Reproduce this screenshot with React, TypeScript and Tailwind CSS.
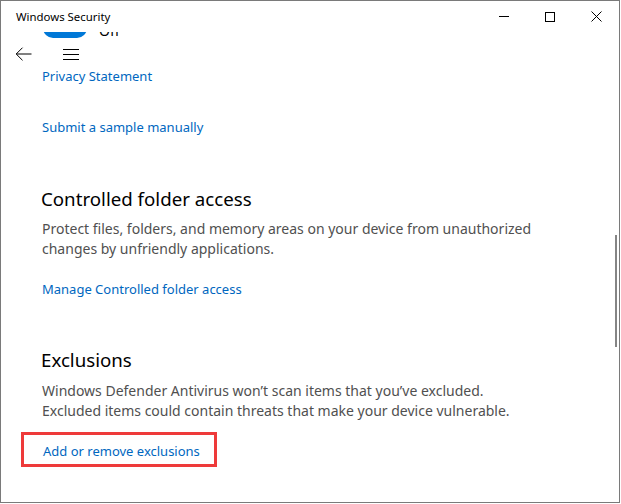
import React from "react";

export default function App() {
  return (
    <div className="w-[621px] h-[504px] bg-white" style={{ fontFamily: '"Noto Sans", "Open Sans", sans-serif' }}>
      <div className="w-[620px] h-[503px] border border-[#7a7a7a] flex flex-col overflow-hidden relative">
        {/* Title bar */}
        <div className="h-[31px] flex items-center shrink-0 relative z-10 bg-white">
          <div className="pl-[15px] text-[11.4px] text-black flex-1">Windows Security</div>
          <div className="flex h-full">
            <div className="w-[46px] h-full flex items-center justify-center">
              <div className="w-[10px] h-px bg-black" />
            </div>
            <div className="w-[46px] h-full flex items-center justify-center">
              <div className="w-[10px] h-[10px] border border-black" />
            </div>
            <div className="w-[46px] h-full flex items-center justify-center">
              <svg width="11" height="11" viewBox="0 0 11 11">
                <path d="M0.5 0.5 L10.5 10.5 M10.5 0.5 L0.5 10.5" stroke="#000" strokeWidth="1" />
              </svg>
            </div>
          </div>
        </div>
        {/* Body */}
        <div className="flex-1 overflow-hidden relative">
          <div className="flex items-end gap-3 ml-[42px] -mt-[14px] h-[20px]">
            <div className="w-[44px] h-[20px] rounded-full bg-[#0078d7]" />
            <div className="h-[6px] overflow-hidden flex items-end">
              <span className="text-[14px] leading-[14px] text-black">Off</span>
            </div>
          </div>
          <div className="h-[28px] pt-[4px] flex items-center">
            <div className="ml-[14px] w-[17px] flex items-center">
              <svg width="17" height="14" viewBox="0 0 17 14">
                <path d="M16.5 7 H1.2 M7.5 0.7 L1.2 7 L7.5 13.3" stroke="#000" strokeWidth="1" fill="none" />
              </svg>
            </div>
            <div className="ml-[31px] flex flex-col gap-[4px]">
              <div className="w-[16px] h-px bg-black" />
              <div className="w-[16px] h-px bg-black" />
              <div className="w-[16px] h-px bg-black" />
            </div>
          </div>
          <div className="pl-[41px] flex flex-col items-start">
            <div className="text-[13px] leading-[20px] text-[#0067c0]">Privacy Statement</div>
            <div className="mt-[31px] text-[13px] leading-[20px] text-[#0067c0]">Submit a sample manually</div>
            <div className="mt-[48px] text-[18.7px] leading-[28px] text-black -ml-[1px]">Controlled folder access</div>
            <div className="mt-[6px] text-[14px] leading-[20px] text-[#505050]">
              <div>Protect files, folders, and memory areas on your device from unauthorized</div>
              <div>changes by unfriendly applications.</div>
            </div>
            <div className="mt-[20px] text-[13px] leading-[20px] text-[#0067c0]">Manage Controlled folder access</div>
            <div className="mt-[47px] text-[18.7px] leading-[28px] text-black -ml-[1px]">Exclusions</div>
            <div className="mt-[7px] text-[14px] leading-[20px] text-[#505050]">
              <div>Windows Defender Antivirus won’t scan items that you’ve excluded.</div>
              <div>Excluded items could contain threats that make your device vulnerable.</div>
            </div>
            <div className="mt-[11px] -ml-[21px] border-[3px] border-[#ee3a3a] pt-[6px] pb-[3px] pl-[19px] pr-[14px]">
              <div className="text-[13px] leading-[20px] text-[#0067c0]">Add or remove exclusions</div>
            </div>
          </div>
          <div className="absolute right-[2px] top-[203px] w-[2px] h-[112px] bg-[#858585]" />
        </div>
      </div>
    </div>
  );
}
